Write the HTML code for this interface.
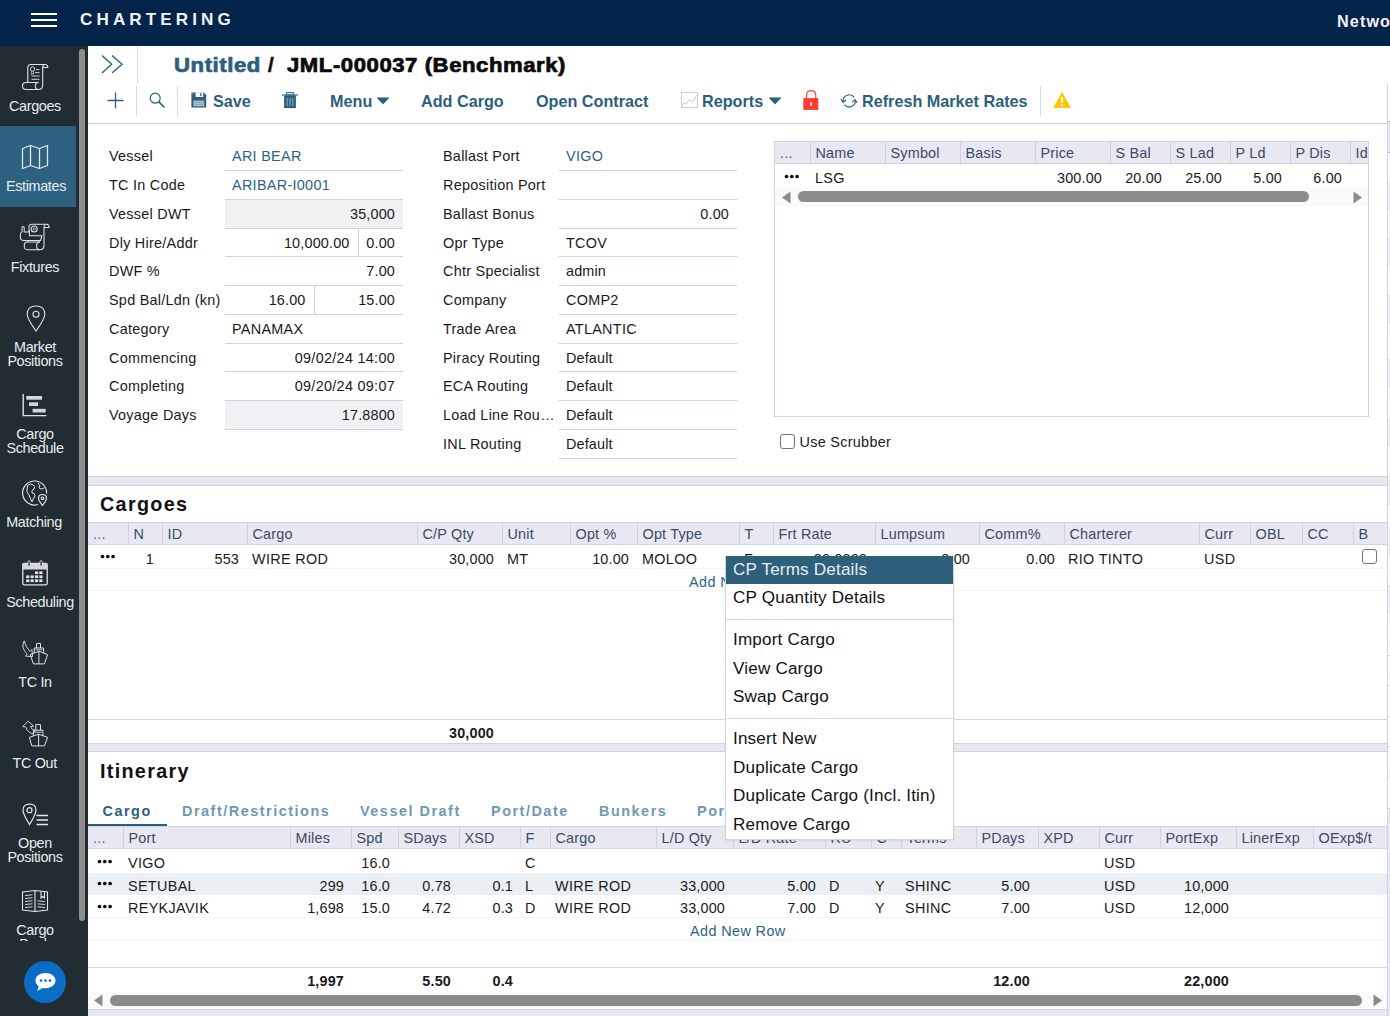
<!DOCTYPE html>
<html><head><meta charset="utf-8">
<style>
*{box-sizing:border-box}
html,body{margin:0;padding:0}
body{width:1390px;height:1016px;overflow:hidden;position:relative;background:#fff;font-family:"Liberation Sans",sans-serif;font-size:14.4px;color:#1a1a1a}
.a{position:absolute;white-space:nowrap}
#hdr{left:0;top:0;width:1390px;height:46px;background:#04244a}
#side{left:0;top:46px;width:88px;height:970px;background:#222c33}
.sl{color:#e8ecee;font-size:14.4px;letter-spacing:-0.35px;text-align:center;width:76px;left:-3px;line-height:14px}
.lb{left:109px;line-height:18px;letter-spacing:0.27px}
.lb2{left:443px;line-height:18px;letter-spacing:0.27px}
.f{letter-spacing:0.17px;height:29px;border-bottom:1px solid #ccd4dd;line-height:29px;padding:0 8px 0 7px}
.f1{left:225px;width:178px}
.f2{left:559px;width:178px}
.r{text-align:right}
.ro{background:#f0f1f3}
.bl{color:#2d6482}
.tb{color:#2b5f7d;font-weight:bold;font-size:16.2px;line-height:20px;top:91px}
.band{left:88px;width:1299px;background:#e7e8f0;border-top:1px solid #cdd3de;border-bottom:1px solid #cdd3de}
.h2{font-weight:bold;font-size:19.8px;letter-spacing:1.3px;color:#111;left:100px;line-height:24px}
.th{background:#e7e8f2;border-top:1px solid #cfd3e0;border-bottom:1px solid #cfd3e0;height:23px}
.hc{color:#3a4a63;line-height:22.4px;top:0;height:21px;border-left:1px solid #cfd3e0;padding-left:4.5px;font-size:14.4px;letter-spacing:0.2px}
.c{line-height:24.4px;height:24px;letter-spacing:0.17px}
.u{letter-spacing:0.33px}
.dots{font-size:9.5px;letter-spacing:-0.2px;font-weight:bold;color:#111}
.tab{font-weight:bold;font-size:14.4px;letter-spacing:1.53px;color:#6f98b2;top:802px;line-height:18px}
.mi{left:7px;font-size:17.1px;line-height:22px;color:#111;letter-spacing:0.18px}
</style></head><body>
<div class="a" id="hdr">
 <div class="a" style="left:31px;top:13px;width:26px;height:2px;background:#fff"></div>
 <div class="a" style="left:31px;top:19px;width:26px;height:2px;background:#fff"></div>
 <div class="a" style="left:31px;top:25.3px;width:26px;height:2px;background:#fff"></div>
 <div class="a" id="brand" style="left:80px;top:10px;color:#f0f2f6;font-weight:bold;font-size:17.1px;letter-spacing:4.1px;line-height:20px">CHARTERING</div>
 <div class="a" id="netw" style="left:1337px;top:11px;color:#f0f2f6;font-weight:bold;font-size:16.2px;letter-spacing:1.1px;line-height:20px">Network</div>
</div>
<!-- title row -->
<svg class="a" style="left:100px;top:55px" width="24" height="20" viewBox="0 0 24 20"><path d="M2 0.5 L11.6 9.3 L2 18 M12 0.5 L22 9.3 L12 18" fill="none" stroke="#2b5f7d" stroke-width="1.35"/></svg>
<div class="a" style="left:137px;top:46px;width:1px;height:38px;background:#d3dae3"></div>
<div class="a" id="t1" style="left:173.8px;top:52px;font-weight:bold;font-size:19.8px;line-height:26px;color:#2b5f7d;-webkit-text-stroke:0.7px #2b5f7d;letter-spacing:0.5px;transform:scaleX(1.12);transform-origin:0 0">Untitled <span style="color:#111;-webkit-text-stroke:0.3px #111">/</span></div>
<div class="a" id="t2" style="left:287px;top:52px;font-weight:bold;font-size:19.8px;line-height:26px;color:#0b0b0b;-webkit-text-stroke:0.7px #0b0b0b;letter-spacing:0.5px;transform:scaleX(1.118);transform-origin:0 0">JML-000037 (Benchmark)</div>
<!-- toolbar -->
<svg class="a" style="left:106px;top:91px" width="20" height="20" viewBox="0 0 20 20"><path d="M9.5 1.5 V17.5 M1.5 9.5 H17.5" stroke="#2b5f7d" stroke-width="1.3" fill="none"/></svg>
<div class="a" style="left:136px;top:86px;width:1px;height:30px;background:#d3dae3"></div>
<svg class="a" style="left:148px;top:91px" width="20" height="20" viewBox="0 0 20 20"><circle cx="7.2" cy="7.2" r="5" fill="none" stroke="#2b5f7d" stroke-width="1.2"/><path d="M10.8 10.8 L16.5 16.5" stroke="#2b5f7d" stroke-width="1.7" fill="none"/></svg>
<div class="a" style="left:177px;top:86px;width:1px;height:30px;background:#d3dae3"></div>
<svg class="a" style="left:190.7px;top:92px" width="16" height="16" viewBox="0 0 16 16"><path d="M0.4 0.4 H12.6 L15.2 3 V15.6 H0.4 Z" fill="#2b5f7d"/><rect x="4.6" y="0.4" width="7.6" height="4.6" fill="#fff"/><rect x="9.2" y="1.2" width="1.3" height="3" fill="#2b5f7d"/><rect x="1.3" y="1.2" width="1.2" height="1.4" fill="#7f9fb3"/><rect x="2.4" y="8.6" width="10.8" height="5.6" fill="#b4c6d1"/><path d="M2.4 10.4 H13.2 M2.4 12.4 H13.2" stroke="#6f93a8" stroke-width="0.7"/></svg>
<div class="a tb" id="save" style="left:213px">Save</div>
<svg class="a" style="left:281.7px;top:91.6px" width="16" height="17" viewBox="0 0 16 17"><rect x="4.6" y="0.5" width="6.8" height="2.4" fill="none" stroke="#2b5f7d" stroke-width="0.9"/><rect x="0" y="2.4" width="16" height="1.1" fill="#2b5f7d"/><rect x="2.1" y="3.4" width="11.8" height="12.7" fill="#2b5f7d"/><path d="M5.2 6 V14 M8 6 V14 M10.8 6 V14" stroke="#9fb8c6" stroke-width="0.9"/></svg>
<div class="a tb" id="menu" style="left:330px">Menu</div>
<svg class="a" style="left:376px;top:97px" width="14" height="8" viewBox="0 0 14 8"><path d="M0.5 0.5 H13.5 L7 7.5 Z" fill="#2b5f7d"/></svg>
<div class="a tb" id="addc" style="left:421px">Add Cargo</div>
<div class="a tb" id="openc" style="left:536px">Open Contract</div>
<svg class="a" style="left:681px;top:92px" width="17" height="17" viewBox="0 0 17 17"><rect x="0.5" y="0.5" width="16" height="15" fill="#fff" stroke="#c3c9d4" stroke-width="0.9"/><path d="M0.8 13.6 L2.6 11.2 L4.6 12.3 L8 7.6 L10.4 9.4 L12.2 9 L16.2 2.6" stroke="#b3bbd0" stroke-width="0.85" fill="none"/></svg>
<div class="a tb" id="rep" style="left:702px">Reports</div>
<svg class="a" style="left:768px;top:97px" width="14" height="8" viewBox="0 0 14 8"><path d="M0.5 0.5 H13.5 L7 7.5 Z" fill="#2b5f7d"/></svg>
<svg class="a" style="left:802px;top:89px" width="18" height="22" viewBox="0 0 18 22"><path d="M4.6 9.5 V6.2 Q4.6 1.6 9.2 1.6 Q13.8 1.6 13.8 6.2 V9.5" fill="none" stroke="#fb4a44" stroke-width="1.2"/><rect x="1.3" y="9.1" width="15" height="11.8" fill="#fc3b31"/><rect x="8.2" y="13.2" width="1.8" height="3.7" fill="#ffe9e4"/></svg>
<svg class="a" style="left:840px;top:92.5px" width="18" height="16" viewBox="0 0 18 16" fill="none" stroke="#2b5f7d" stroke-width="1.15"><path d="M14.2 4.4 A6.1 6.1 0 0 0 3.2 8.6"/><path d="M0.9 6 L3.1 9.3 L6 7"/><path d="M4.4 11.6 A6.1 6.1 0 0 0 15.3 7.4"/><path d="M12.2 9.4 L14.9 6.6 L17.1 9.7"/></svg>
<div class="a tb" id="refr" style="left:862px">Refresh Market Rates</div>
<div class="a" style="left:1040px;top:86px;width:1px;height:30px;background:#d3dae3"></div>
<svg class="a" style="left:1052px;top:91px" width="20" height="18" viewBox="0 0 20 18"><path d="M10 1.9 L18.2 16.4 H1.8 Z" fill="#fdc800" stroke="#fdc800" stroke-width="1" stroke-linejoin="round"/><rect x="9.1" y="6" width="1.8" height="6" fill="#fff"/><rect x="9.1" y="13.2" width="1.8" height="1.9" fill="#fff"/></svg>
<div class="a" style="left:88px;top:123px;width:1299px;height:1px;background:#c6cfda"></div>
<!-- right panel edge -->
<div class="a" style="left:1388px;top:182px;width:2px;height:29px;background:#edf1f5"></div>
<div class="a" style="left:1388px;top:237px;width:2px;height:29px;background:#edf1f5"></div>
<div class="a" style="left:1388px;top:295px;width:2px;height:29px;background:#edf1f5"></div>
<div class="a" style="left:1388px;top:359px;width:2px;height:29px;background:#edf1f5"></div>
<div class="a" style="left:1388px;top:418px;width:2px;height:29px;background:#edf1f5"></div>
<div class="a" style="left:1388px;top:476px;width:2px;height:29px;background:#edf1f5"></div>
<div class="a" style="left:1388px;top:527px;width:2px;height:29px;background:#edf1f5"></div>
<div class="a" style="left:1388px;top:585px;width:2px;height:29px;background:#edf1f5"></div>
<div class="a" style="left:1388px;top:655px;width:2px;height:1px;background:#d5d9e5"></div>
<div class="a" style="left:1388px;top:685px;width:2px;height:1px;background:#d5d9e5"></div>
<div class="a" style="left:1388px;top:716px;width:2px;height:1px;background:#d5d9e5"></div>
<div class="a" style="left:1388px;top:746px;width:2px;height:1px;background:#d5d9e5"></div>
<div class="a" style="left:1388px;top:777px;width:2px;height:1px;background:#d5d9e5"></div>
<div class="a" style="left:1388px;top:808px;width:2px;height:208px;background:#e7e8f2;border-top:1px solid #cfd3e0"></div>
<div class="a" style="left:1388px;top:121px;width:2px;height:32px;background:#e7e8f2;border-top:1px solid #b9b6d8;border-bottom:1px solid #b9b6d8"></div>
<div class="a" id="side">
<div class="a" style="left:79px;top:3px;width:6px;height:872px;border-radius:3px;background:#8e8e8e"></div>
<div class="a" style="left:0;top:80px;width:76px;height:81px;background:#2d617f"></div>
<!-- y coords here are relative to sidebar top (46) -->
<!-- Cargoes icon: scroll -->
<svg class="a" style="left:20px;top:16px" width="30" height="30" viewBox="0 0 30 30" fill="none" stroke="#dfe3e8" stroke-width="1.1"><path d="M7.8 20.5 V5.5 Q7.8 2.5 10.8 2.5 H25 Q27.8 2.5 27.8 5.5 H22.7 V23 Q22.7 27.5 18.5 27.5 H6 Q2.5 27.5 2.5 24 Q2.5 20.5 6 20.5 H18.5"/><path d="M18.5 27.5 Q15.3 27.5 15.3 24 Q15.3 20.5 18.5 20.5"/><path d="M22.7 5.5 Q22.7 2.5 25 2.5"/><circle cx="12.6" cy="7" r="2.2" stroke-width="0.9"/><path d="M11.6 9.2 V12.4 L12.6 11.6 L13.6 12.4 V9.2" stroke-width="0.7"/><path d="M16 7.6 H19.5 M15 10.6 H19.5 M11.5 14 H19.5 M11.5 17.3 H19.5" stroke-width="0.9"/></svg>
<div class="a sl" style="top:53px;left:-3px">Cargoes</div>
<!-- Estimates: map -->
<svg class="a" style="left:21px;top:98px" width="28" height="26" viewBox="0 0 28 26" fill="none" stroke="#e3e7ea" stroke-width="1.3" stroke-linejoin="round"><path d="M1.5 4.5 L9.5 1.5 L18.5 4.5 L26.5 1.5 V21.5 L18.5 24.5 L9.5 21.5 L1.5 24.5 Z"/><path d="M9.5 1.5 V21.5 M18.5 4.5 V24.5"/></svg>
<div class="a sl" style="top:133px;left:-2px">Estimates</div>
<!-- Fixtures -->
<svg class="a" style="left:19px;top:176px" width="32" height="30" viewBox="0 0 32 30" fill="none" stroke="#dfe3e8" stroke-width="1.05"><path d="M10 10 V5 Q10 2.2 13 2.2 H27.5 Q30.1 2.2 30.1 5.4 H25 V23.5 Q25 27.7 21 27.7 H8.5 Q5.2 27.7 5.2 23.9 Q5.2 20 8.5 20 H21"/><path d="M21 27.7 Q17.6 27.7 17.6 23.9 Q17.6 20 21 20"/><path d="M25 5.4 Q25 2.2 27.5 2.2"/><circle cx="15.2" cy="7" r="3"/><circle cx="15.2" cy="7" r="1.1" stroke-width="0.7"/><path d="M5.2 10 V5.4 Q5.2 4.4 4.1 4.4 Q3 4.4 3 5.4 V10 Q1.4 10.6 1.4 12.6 V15.2 Q1.4 18.4 4.6 18.4 H21.6 L22.8 13.7 H10.4 V8.2"/><path d="M5.2 10 H10.4"/><path d="M9 18.4 V20"/></svg>
<div class="a sl" style="top:214px;left:-3px">Fixtures</div>
<!-- Market Positions: pin -->
<svg class="a" style="left:25.5px;top:259px" width="20" height="28" viewBox="0 0 20 28" fill="none" stroke="#dfe3e8" stroke-width="1.1"><path d="M10 26 Q1.2 13.5 1.2 9.4 Q1.2 1 10 1 Q18.8 1 18.8 9.4 Q18.8 13.5 10 26 Z"/><circle cx="10" cy="9.2" r="3"/></svg>
<div class="a sl" style="top:294px;left:-3px">Market<br>Positions</div>
<!-- Cargo Schedule: gantt -->
<svg class="a" style="left:22px;top:348px" width="26" height="24" viewBox="0 0 26 24"><path d="M1.2 0 V21.6 H24.4" fill="none" stroke="#dfe3e8" stroke-width="1.4"/><rect x="4.3" y="2" width="15.8" height="3.7" fill="#d3d6e2"/><rect x="7.1" y="8.3" width="9" height="3.7" fill="#d3d6e2"/><rect x="10.6" y="14.8" width="13.1" height="3.7" fill="#d3d6e2"/></svg>
<div class="a sl" style="top:381px;left:-3px">Cargo<br>Schedule</div>
<!-- Matching: globe -->
<svg class="a" style="left:21px;top:433px" width="28" height="28" viewBox="0 0 28 28" fill="none" stroke="#e3e7ea" stroke-width="1.2"><path d="M17 25.5 A12 12 0 1 1 25.6 14.5"/><path d="M7 6 Q10 4 12 6 Q15 7 13 10 Q10 11 11 14 Q14 14 14 17 Q12 20 11 23 Q9 19 8 16 Q5 13 6 10 Z" stroke-width="1"/><path d="M17 4 Q20 7 18 9 Q21 11 23 9" stroke-width="1"/><path d="M21.5 26.5 Q17.5 21.5 17.5 19.3 Q17.5 15.5 21.5 15.5 Q25.5 15.5 25.5 19.3 Q25.5 21.5 21.5 26.5 Z"/><circle cx="21.5" cy="19.3" r="1.3"/></svg>
<div class="a sl" style="top:469px;left:-4px">Matching</div>
<!-- Scheduling: calendar -->
<svg class="a" style="left:22px;top:514px" width="26" height="27" viewBox="0 0 26 27"><rect x="0.8" y="3.3" width="24.4" height="21.6" rx="1.5" fill="none" stroke="#dfe3e8" stroke-width="1.3"/><rect x="0.8" y="3.3" width="24.4" height="6.2" fill="#d3d6e2"/><rect x="6" y="0.6" width="2.1" height="5.6" rx="1" fill="#222d32" stroke="#dfe3e8" stroke-width="0.8"/><rect x="18" y="0.6" width="2.1" height="5.6" rx="1" fill="#222d32" stroke="#dfe3e8" stroke-width="0.8"/><g fill="#dfe3e8"><rect x="13" y="11.4" width="3.2" height="2.7"/><rect x="17.3" y="11.4" width="3.2" height="2.7"/><rect x="4.2" y="15.4" width="3.2" height="2.7"/><rect x="8.6" y="15.4" width="3.2" height="2.7"/><rect x="13" y="15.4" width="3.2" height="2.7"/><rect x="17.3" y="15.4" width="3.2" height="2.7"/><rect x="4.2" y="19.4" width="3.2" height="2.7"/><rect x="8.6" y="19.4" width="3.2" height="2.7"/><rect x="13" y="19.4" width="3.2" height="2.7"/><rect x="17.3" y="19.4" width="3.2" height="2.7"/></g></svg>
<div class="a sl" style="top:549px;left:2px">Scheduling</div>
<!-- TC In -->
<svg class="a" style="left:21px;top:594px" width="28" height="27" viewBox="0 0 28 27" fill="none" stroke="#dfe3e8" stroke-width="1"><path d="M9.2 14.6 L12.4 23.9 H23.4 L26.6 14.6 L17.9 11.2 Z"/><path d="M17.9 11.2 V23.9"/><path d="M13.2 12.9 V8 H22.6 V12.9"/><path d="M15.5 8 V3.4 H19.5 V8"/><path d="M14.5 9.8 H21.3" stroke-width="0.9"/><path d="M3.2 0.8 Q-0.5 7.5 6.2 14.2 L4.6 16.2 L11.6 16.6 L10.9 9.4 L9 11.4 Q4.8 7.5 3.2 0.8 Z" stroke-width="0.9"/></svg>
<div class="a sl" style="top:629px;left:-3px">TC In</div>
<!-- TC Out -->
<svg class="a" style="left:21px;top:674px" width="28" height="28" viewBox="0 0 28 28" fill="none" stroke="#dfe3e8" stroke-width="1"><path d="M8.4 17.4 L10.8 25.9 H23.4 L26.6 17.4 L17.6 14.2 Z"/><path d="M17.6 14.2 V25.9"/><path d="M12.4 15.9 V10.2 H21.9 V15.9"/><path d="M14.8 10.2 V4.6 H19.5 V10.2"/><path d="M13.6 12.2 H20.6" stroke-width="0.9"/><path d="M7.2 1.2 L1.6 6.6 L4.8 7 Q6 12 12 14 L14.2 10.6 Q10.4 9.6 9.4 6.6 L12.6 6.2 Z" stroke-width="0.9"/></svg>
<div class="a sl" style="top:710px;left:-3.3px">TC Out</div>
<!-- Open Positions -->
<svg class="a" style="left:20px;top:756px" width="30" height="26" viewBox="0 0 30 26" fill="none" stroke="#e3e7ea" stroke-width="1.2"><path d="M9.5 22.5 Q3 12 3 8.2 Q3 2.2 9.5 2.2 Q16 2.2 16 8.2 Q16 12 9.5 22.5 Z"/><circle cx="9.5" cy="8.2" r="2.5"/><path d="M16.5 13.5 H28 M16.5 18 H28 M16.5 22.5 H28" stroke-width="1.4"/></svg>
<div class="a sl" style="top:790px;left:-3px">Open<br>Positions</div>
<!-- Cargo Book -->
<svg class="a" style="left:21px;top:843px" width="28" height="24" viewBox="0 0 28 24" fill="none" stroke="#e3e7ea" stroke-width="1.1"><path d="M1.5 3 L14 1.5 L26.5 3 V21 L14 22.5 L1.5 21 Z"/><path d="M14 1.5 V22.5"/><path d="M4 6.5 L11.5 5.8 M4 9.5 L11.5 8.8 M4 12.5 L11.5 11.8 M4 15.5 L11.5 14.8 M4 18.5 L11.5 17.8 M16.5 11.8 L24 12.5 M16.5 14.8 L24 15.5 M16.5 17.8 L24 18.5" stroke-width="0.9"/><path d="M20 2.5 V9 L21.8 7.5 L23.5 9 V2.8"/></svg>
<div class="a" style="left:0;top:876px;width:76px;height:19.3px;overflow:hidden"><div class="a sl" style="top:1px;left:-3px">Cargo<br>Book</div></div>
<!-- chat -->
<div class="a" style="left:24px;top:915px;width:42px;height:42px;border-radius:50%;background:#0a6cc4"></div>
<svg class="a" style="left:33.5px;top:925.5px" width="23" height="21" viewBox="0 0 23 21"><path d="M11.5 1 C5.5 1 1.5 4.3 1.5 8.6 C1.5 11 2.8 13 4.8 14.4 L3.2 19 L8.6 15.9 C9.5 16.1 10.5 16.2 11.5 16.2 C17.5 16.2 21.5 12.9 21.5 8.6 C21.5 4.3 17.5 1 11.5 1 Z" fill="#fff"/><circle cx="7" cy="8.6" r="1.3" fill="#0a6cc4"/><circle cx="11.5" cy="8.6" r="1.3" fill="#0a6cc4"/><circle cx="16" cy="8.6" r="1.3" fill="#0a6cc4"/></svg>
</div>
<!-- left form column -->
<div class="a lb" style="top:147px">Vessel</div>
<div class="a lb" style="top:176px">TC In Code</div>
<div class="a lb" style="top:205px">Vessel DWT</div>
<div class="a lb" style="top:234px">Dly Hire/Addr</div>
<div class="a lb" style="top:262px">DWF %</div>
<div class="a lb" style="top:291px">Spd Bal/Ldn (kn)</div>
<div class="a lb" style="top:320px">Category</div>
<div class="a lb" style="top:349px">Commencing</div>
<div class="a lb" style="top:377px">Completing</div>
<div class="a lb" style="top:406px">Voyage Days</div>
<div class="a f f1 bl" style="top:142px;letter-spacing:0.3px">ARI BEAR</div>
<div class="a f f1 bl" style="top:171px;letter-spacing:0.3px">ARIBAR-I0001</div>
<div class="a f f1 r ro" style="top:200px">35,000</div>
<div class="a f f1 r" style="top:229px;height:28px;line-height:28.6px;width:133px;padding-right:8.5px">10,000.00</div>
<div class="a f r" style="top:229px;height:28px;line-height:28.6px;left:358px;width:45px;border-left:1px solid #ccd4dd">0.00</div>
<div class="a f f1 r" style="top:257px">7.00</div>
<div class="a f f1 r" style="top:286px;width:89px;padding-right:8.5px">16.00</div>
<div class="a f r" style="top:286px;left:314px;width:89px;border-left:1px solid #ccd4dd">15.00</div>
<div class="a f f1" style="top:315px;letter-spacing:0.3px">PANAMAX</div>
<div class="a f f1 r" style="top:344px;height:28px;line-height:28.6px;letter-spacing:0.3px">09/02/24 14:00</div>
<div class="a f f1 r" style="top:372px;letter-spacing:0.3px">09/20/24 09:07</div>
<div class="a f f1 r ro" style="top:401px">17.8800</div>
<!-- middle form column -->
<div class="a lb2" style="top:147px">Ballast Port</div>
<div class="a lb2" style="top:176px">Reposition Port</div>
<div class="a lb2" style="top:205px">Ballast Bonus</div>
<div class="a lb2" style="top:234px">Opr Type</div>
<div class="a lb2" style="top:262px">Chtr Specialist</div>
<div class="a lb2" style="top:291px">Company</div>
<div class="a lb2" style="top:320px">Trade Area</div>
<div class="a lb2" style="top:349px">Piracy Routing</div>
<div class="a lb2" style="top:377px">ECA Routing</div>
<div class="a lb2" style="top:406px">Load Line Rou…</div>
<div class="a lb2" style="top:435px">INL Routing</div>
<div class="a f f2 bl" style="top:142px;letter-spacing:0.3px">VIGO</div>
<div class="a f f2" style="top:171px"></div>
<div class="a f f2 r" style="top:200px">0.00</div>
<div class="a f f2" style="top:229px;height:28px;line-height:28.6px;letter-spacing:0.3px">TCOV</div>
<div class="a f f2" style="top:257px;letter-spacing:0.15px">admin</div>
<div class="a f f2" style="top:286px;letter-spacing:0.3px">COMP2</div>
<div class="a f f2" style="top:315px;letter-spacing:0.3px">ATLANTIC</div>
<div class="a f f2" style="top:344px;height:28px;line-height:28.6px;letter-spacing:0.15px">Default</div>
<div class="a f f2" style="top:372px;letter-spacing:0.15px">Default</div>
<div class="a f f2" style="top:401px;letter-spacing:0.15px">Default</div>
<div class="a f f2" style="top:430px;letter-spacing:0.15px">Default</div>
<!-- bunker table -->
<div class="a" style="left:774px;top:141px;width:595px;height:276px;border:1px solid #cfd3e0"></div>
<div class="a th" style="left:775px;top:141px;width:593px">
 <div class="a hc" style="left:0;width:34px;border-left:0;padding-left:5px;color:#5a6680">...</div>
 <div class="a hc" style="left:35px;width:75px">Name</div>
 <div class="a hc" style="left:110px;width:75px">Symbol</div>
 <div class="a hc" style="left:185px;width:75px">Basis</div>
 <div class="a hc" style="left:260px;width:75px">Price</div>
 <div class="a hc" style="left:335px;width:60px">S Bal</div>
 <div class="a hc" style="left:395px;width:60px">S Lad</div>
 <div class="a hc" style="left:455px;width:60px">P Ld</div>
 <div class="a hc" style="left:515px;width:60px">P Dis</div>
 <div class="a hc" style="left:575px;width:18px;overflow:hidden">Id</div>
</div>
<svg class="a" style="left:783.9px;top:173.5px" width="16" height="5" viewBox="0 0 16 5"><circle cx="2.5" cy="2.5" r="1.85" fill="#111"/><circle cx="7.8" cy="2.5" r="1.85" fill="#111"/><circle cx="13.1" cy="2.5" r="1.85" fill="#111"/></svg>
<div class="a c" style="left:815px;top:166px;letter-spacing:0.3px">LSG</div>
<div class="a c r" style="left:1030px;top:166px;width:72px">300.00</div>
<div class="a c r" style="left:1102px;top:166px;width:60px">20.00</div>
<div class="a c r" style="left:1162px;top:166px;width:60px">25.00</div>
<div class="a c r" style="left:1222px;top:166px;width:60px">5.00</div>
<div class="a c r" style="left:1282px;top:166px;width:60px">6.00</div>
<div class="a" style="left:775px;top:188px;width:593px;height:18px;background:#fafafa"></div>
<svg class="a" style="left:780.5px;top:190.5px" width="10" height="13" viewBox="0 0 10 13"><path d="M9.5 0.5 V12.5 L1 6.5 Z" fill="#8b8b8b"/></svg>
<svg class="a" style="left:1352.5px;top:190.5px" width="10" height="13" viewBox="0 0 10 13"><path d="M0.5 0.5 V12.5 L9 6.5 Z" fill="#8b8b8b"/></svg>
<div class="a" style="left:798px;top:191px;width:511px;height:11px;border-radius:5.5px;background:#8b8b8b"></div>
<!-- scrubber -->
<div class="a" style="left:779.7px;top:434px;width:15px;height:15px;border:1.6px solid #747474;border-radius:3px;background:#fff"></div>
<div class="a" style="left:799.5px;top:433.5px;line-height:17px;letter-spacing:0.3px">Use Scrubber</div>
<!-- band -->
<div class="a band" style="top:476px;height:10px"></div>
<!-- Cargoes -->
<div class="a h2" style="top:492px">Cargoes</div>
<div class="a th" style="left:88px;top:522px;width:1299px">
 <div class="a hc" style="left:0;width:40px;border-left:0;padding-left:5px;color:#5a6680">...</div>
 <div class="a hc" style="left:40px;width:34px">N</div>
 <div class="a hc" style="left:74px;width:85px">ID</div>
 <div class="a hc" style="left:159px;width:170px">Cargo</div>
 <div class="a hc" style="left:329px;width:85px">C/P Qty</div>
 <div class="a hc" style="left:414px;width:68px">Unit</div>
 <div class="a hc" style="left:482px;width:67px">Opt %</div>
 <div class="a hc" style="left:549px;width:102px">Opt Type</div>
 <div class="a hc" style="left:651px;width:34px">T</div>
 <div class="a hc" style="left:685px;width:102px">Frt Rate</div>
 <div class="a hc" style="left:787px;width:104px">Lumpsum</div>
 <div class="a hc" style="left:891px;width:85px">Comm%</div>
 <div class="a hc" style="left:976px;width:136px">Charterer</div>
 <div class="a hc" style="left:1111px;width:51px">Curr</div>
 <div class="a hc" style="left:1162px;width:52px">OBL</div>
 <div class="a hc" style="left:1214px;width:51px">CC</div>
 <div class="a hc" style="left:1265px;width:34px">B</div>
</div>
<div class="a" style="left:88px;top:568px;width:1299px;height:1px;background:#f3f4f7"></div>
<div class="a" style="left:88px;top:590px;width:1299px;height:1px;background:#f3f4f7"></div>
<svg class="a" style="left:99.5px;top:553.8px" width="16" height="5" viewBox="0 0 16 5"><circle cx="2.5" cy="2.5" r="1.85" fill="#111"/><circle cx="7.8" cy="2.5" r="1.85" fill="#111"/><circle cx="13.1" cy="2.5" r="1.85" fill="#111"/></svg>
<div class="a c r" style="left:128px;top:546.5px;width:26px">1</div>
<div class="a c r" style="left:162px;top:546.5px;width:77px">553</div>
<div class="a c u" style="left:252px;top:546.5px">WIRE ROD</div>
<div class="a c r" style="left:417px;top:546.5px;width:77px">30,000</div>
<div class="a c u" style="left:507px;top:546.5px">MT</div>
<div class="a c r" style="left:570px;top:546.5px;width:59px">10.00</div>
<div class="a c u" style="left:642px;top:546.5px">MOLOO</div>
<div class="a c" style="left:744px;top:546.5px">F</div>
<div class="a c r" style="left:780px;top:546.5px;width:87px">30.0000</div>
<div class="a c r" style="left:880px;top:546.5px;width:90px">0.00</div>
<div class="a c r" style="left:980px;top:546.5px;width:75px">0.00</div>
<div class="a c u" style="left:1068px;top:546.5px">RIO TINTO</div>
<div class="a c u" style="left:1204px;top:546.5px">USD</div>
<div class="a" style="left:1362px;top:548.5px;width:15px;height:15px;border:1.6px solid #747474;border-radius:3px;background:#fff"></div>
<div class="a c bl" style="left:689px;top:569.5px;letter-spacing:0.4px">Add New Row</div>
<div class="a" style="left:88px;top:719px;width:1299px;height:1px;background:#cfd4de"></div>
<div class="a c r" style="left:417px;top:720.8px;width:77px;font-weight:bold">30,000</div>
<div class="a band" style="top:743px;height:9px"></div>
<!-- Itinerary -->
<div class="a h2" style="top:759px">Itinerary</div>
<div class="a tab" style="left:102.5px;color:#2b5f7d">Cargo</div>
<div class="a tab" style="left:182px">Draft/Restrictions</div>
<div class="a tab" style="left:360px">Vessel Draft</div>
<div class="a tab" style="left:491px">Port/Date</div>
<div class="a tab" style="left:599px">Bunkers</div>
<div class="a tab" style="left:697px">Port Expenses</div>
<div class="a" style="left:88px;top:824px;width:79px;height:2px;background:#2b5f7d"></div>
<div class="a th" style="left:88px;top:826px;width:1299px;height:23px">
 <div class="a hc" style="left:0;width:35px;border-left:0;padding-left:5px;color:#5a6680">...</div>
 <div class="a hc" style="left:35px;width:167px">Port</div>
 <div class="a hc" style="left:202px;width:61px">Miles</div>
 <div class="a hc" style="left:263px;width:47px">Spd</div>
 <div class="a hc" style="left:310px;width:61px">SDays</div>
 <div class="a hc" style="left:371px;width:61px">XSD</div>
 <div class="a hc" style="left:432px;width:30px">F</div>
 <div class="a hc" style="left:462px;width:106px">Cargo</div>
 <div class="a hc" style="left:568px;width:76px">L/D Qty</div>
 <div class="a hc" style="left:645px;width:92px">L/D Rate</div>
 <div class="a hc" style="left:737px;width:46px">RU</div>
 <div class="a hc" style="left:783px;width:30px">C</div>
 <div class="a hc" style="left:813px;width:75px">Terms</div>
 <div class="a hc" style="left:888px;width:62px">PDays</div>
 <div class="a hc" style="left:950px;width:61px">XPD</div>
 <div class="a hc" style="left:1011px;width:61px">Curr</div>
 <div class="a hc" style="left:1072px;width:76px">PortExp</div>
 <div class="a hc" style="left:1148px;width:77px">LinerExp</div>
 <div class="a hc" style="left:1225px;width:74px">OExp$/t</div>
</div>
<div class="a" style="left:88px;top:873px;width:1299px;height:21.5px;background:#e9eff2"></div>
<div class="a" style="left:88px;top:917px;width:1299px;height:1px;background:#f3f4f7"></div>
<div class="a" style="left:88px;top:939px;width:1299px;height:1px;background:#f3f4f7"></div>
<!-- row1 -->
<svg class="a" style="left:96.8px;top:858.6px" width="16" height="5" viewBox="0 0 16 5"><circle cx="2.5" cy="2.5" r="1.85" fill="#111"/><circle cx="7.8" cy="2.5" r="1.85" fill="#111"/><circle cx="13.1" cy="2.5" r="1.85" fill="#111"/></svg>
<div class="a c u" style="left:128px;top:851px">VIGO</div>
<div class="a c r" style="left:351px;top:851px;width:39px">16.0</div>
<div class="a c" style="left:525px;top:851px">C</div>
<div class="a c u" style="left:1104px;top:851px">USD</div>
<!-- row2 -->
<svg class="a" style="left:96.8px;top:880.8px" width="16" height="5" viewBox="0 0 16 5"><circle cx="2.5" cy="2.5" r="1.85" fill="#111"/><circle cx="7.8" cy="2.5" r="1.85" fill="#111"/><circle cx="13.1" cy="2.5" r="1.85" fill="#111"/></svg>
<div class="a c u" style="left:128px;top:874px">SETUBAL</div>
<div class="a c r" style="left:290px;top:874px;width:54px">299</div>
<div class="a c r" style="left:351px;top:874px;width:39px">16.0</div>
<div class="a c r" style="left:398px;top:874px;width:53px">0.78</div>
<div class="a c r" style="left:459px;top:874px;width:54px">0.1</div>
<div class="a c" style="left:525px;top:874px">L</div>
<div class="a c u" style="left:555px;top:874px">WIRE ROD</div>
<div class="a c r" style="left:656px;top:874px;width:69px">33,000</div>
<div class="a c r" style="left:732px;top:874px;width:84px">5.00</div>
<div class="a c" style="left:829px;top:874px">D</div>
<div class="a c" style="left:875px;top:874px">Y</div>
<div class="a c u" style="left:905px;top:874px">SHINC</div>
<div class="a c r" style="left:975px;top:874px;width:55px">5.00</div>
<div class="a c u" style="left:1104px;top:874px">USD</div>
<div class="a c r" style="left:1158px;top:874px;width:71px">10,000</div>
<!-- row3 -->
<svg class="a" style="left:96.8px;top:903.5px" width="16" height="5" viewBox="0 0 16 5"><circle cx="2.5" cy="2.5" r="1.85" fill="#111"/><circle cx="7.8" cy="2.5" r="1.85" fill="#111"/><circle cx="13.1" cy="2.5" r="1.85" fill="#111"/></svg>
<div class="a c u" style="left:128px;top:896px">REYKJAVIK</div>
<div class="a c r" style="left:290px;top:896px;width:54px">1,698</div>
<div class="a c r" style="left:351px;top:896px;width:39px">15.0</div>
<div class="a c r" style="left:398px;top:896px;width:53px">4.72</div>
<div class="a c r" style="left:459px;top:896px;width:54px">0.3</div>
<div class="a c" style="left:525px;top:896px">D</div>
<div class="a c u" style="left:555px;top:896px">WIRE ROD</div>
<div class="a c r" style="left:656px;top:896px;width:69px">33,000</div>
<div class="a c r" style="left:732px;top:896px;width:84px">7.00</div>
<div class="a c" style="left:829px;top:896px">D</div>
<div class="a c" style="left:875px;top:896px">Y</div>
<div class="a c u" style="left:905px;top:896px">SHINC</div>
<div class="a c r" style="left:975px;top:896px;width:55px">7.00</div>
<div class="a c u" style="left:1104px;top:896px">USD</div>
<div class="a c r" style="left:1158px;top:896px;width:71px">12,000</div>
<div class="a c bl" style="left:690px;top:919px;letter-spacing:0.4px">Add New Row</div>
<div class="a" style="left:88px;top:967px;width:1299px;height:1px;background:#cfd4de"></div>
<div class="a c r" style="left:290px;top:969px;width:54px;font-weight:bold">1,997</div>
<div class="a c r" style="left:398px;top:969px;width:53px;font-weight:bold">5.50</div>
<div class="a c r" style="left:459px;top:969px;width:54px;font-weight:bold">0.4</div>
<div class="a c r" style="left:975px;top:969px;width:55px;font-weight:bold">12.00</div>
<div class="a c r" style="left:1158px;top:969px;width:71px;font-weight:bold">22,000</div>
<div class="a" style="left:88px;top:992px;width:1299px;height:17px;background:#fafafa"></div>
<svg class="a" style="left:93px;top:994px" width="10" height="13" viewBox="0 0 10 13"><path d="M9.5 0.5 V12.5 L1 6.5 Z" fill="#8b8b8b"/></svg>
<svg class="a" style="left:1372.5px;top:994px" width="10" height="13" viewBox="0 0 10 13"><path d="M0.5 0.5 V12.5 L9 6.5 Z" fill="#8b8b8b"/></svg>
<div class="a" style="left:110px;top:995px;width:1252px;height:11px;border-radius:5.5px;background:#8b8b8b"></div>
<div class="a band" style="top:1009px;height:7px;border-bottom:0"></div>
<!-- context menu -->
<div class="a" id="ctx" style="left:725px;top:555.6px;width:229px;height:284.2px;background:#fff;border:1px solid #cfd4dc;border-top:0;box-shadow:0 1px 2px rgba(0,0,0,0.08)">
 <div class="a" style="left:0;top:0;width:227px;height:28px;background:#2e607c"></div>
 <div class="a mi" style="top:3.4px;color:#e6edf2">CP Terms Details</div>
 <div class="a mi" style="top:31.4px">CP Quantity Details</div>
 <div class="a" style="left:0;top:63.4px;width:227px;height:1px;background:#d5dae2"></div>
 <div class="a mi" style="top:73.4px">Import Cargo</div>
 <div class="a mi" style="top:102.4px">View Cargo</div>
 <div class="a mi" style="top:130.4px">Swap Cargo</div>
 <div class="a" style="left:0;top:162.4px;width:227px;height:1px;background:#d5dae2"></div>
 <div class="a mi" style="top:172.4px">Insert New</div>
 <div class="a mi" style="top:201.4px">Duplicate Cargo</div>
 <div class="a mi" style="top:229.4px">Duplicate Cargo (Incl. Itin)</div>
 <div class="a mi" style="top:258.4px">Remove Cargo</div>
</div>
<div class="a" style="left:1387px;top:84px;width:1px;height:932px;background:#cfd3e0"></div>
</body></html>
